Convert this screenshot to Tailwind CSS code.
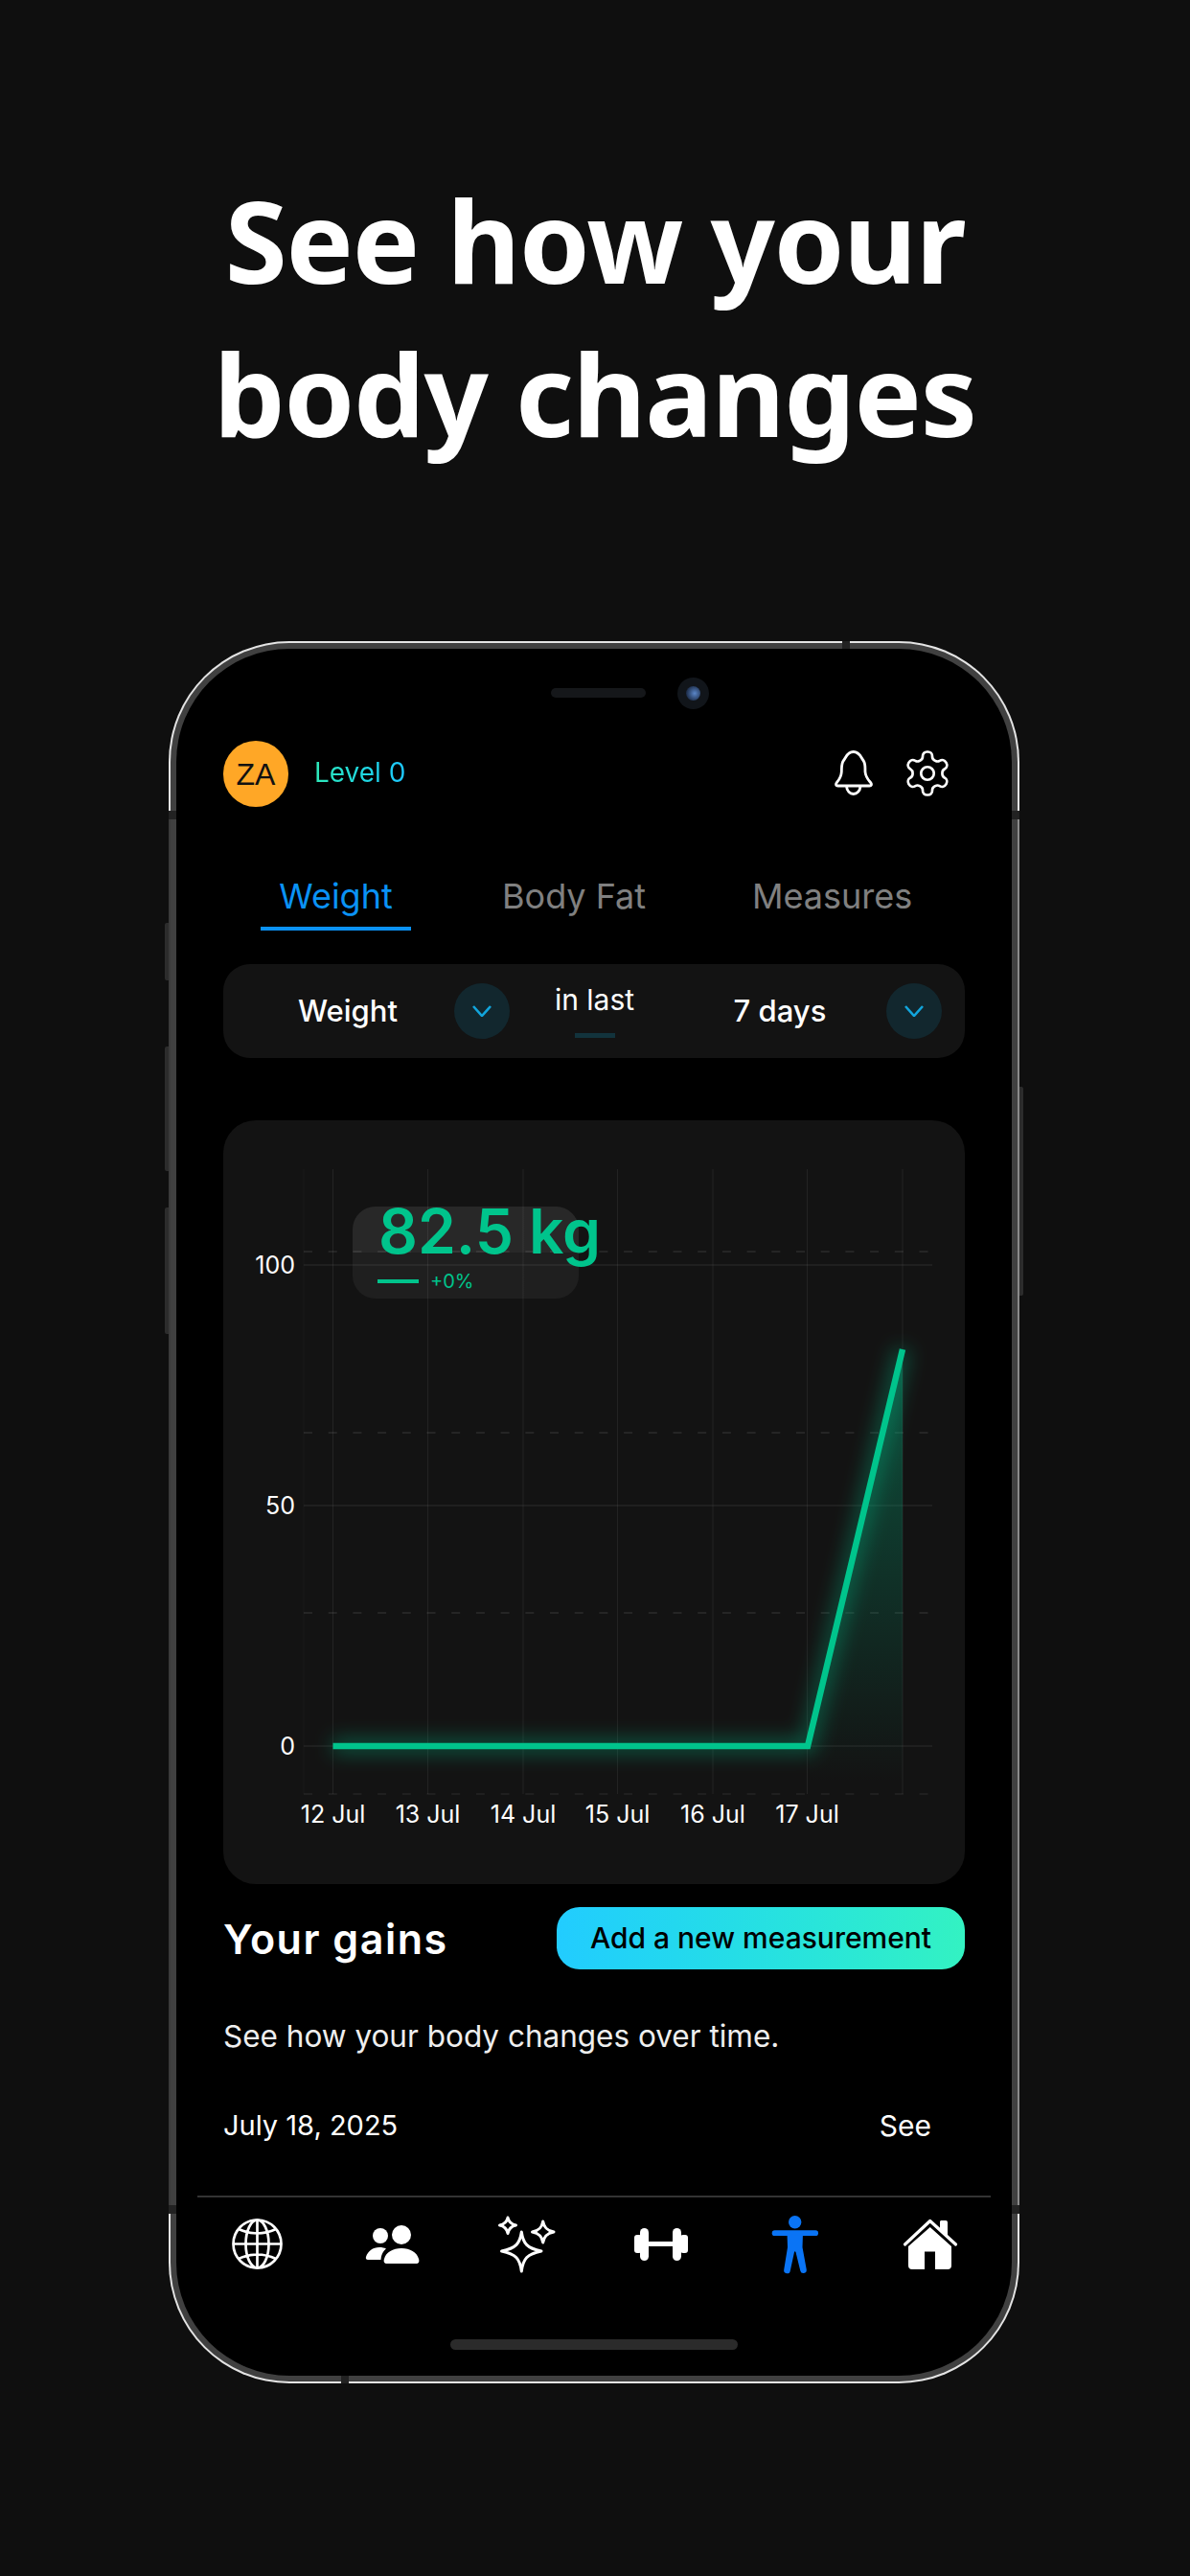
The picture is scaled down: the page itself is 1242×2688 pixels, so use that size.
<!DOCTYPE html>
<html lang="en">
<head>
<meta charset="utf-8">
<script src="https://cdn.jsdelivr.net/npm/@tailwindcss/browser@4"></script>
<title>See how your body changes</title>
</head>
<body class="m-0 bg-[#0f0f0f]">
<div class="relative w-[1242px] h-[2688px] overflow-hidden bg-[#0f0f0f] font-[Inter,sans-serif]">

  <h1 class="pt-[171px] text-center font-['Noto_Sans',sans-serif] font-bold text-[118px] tracking-[-1.2px] leading-[160px] text-white">See how your<br>body changes</h1>

  <!-- phone -->
  <div class="relative mt-[178px] ml-[176px] w-[888px] h-[1818px]">
    <!-- side buttons -->
    <div class="absolute -left-[4px] top-[294px] w-[4px] h-[60px] bg-[#2c2c2c] rounded-l-[2px]"></div>
    <div class="absolute -left-[4px] top-[423px] w-[4px] h-[130px] bg-[#2c2c2c] rounded-l-[2px]"></div>
    <div class="absolute -left-[4px] top-[591px] w-[4px] h-[132px] bg-[#2c2c2c] rounded-l-[2px]"></div>
    <div class="absolute -right-[4px] top-[465px] w-[4px] h-[218px] bg-[#2c2c2c] rounded-r-[2px]"></div>

    <div class="w-full h-full rounded-[126px] bg-[#e4e4e4] p-[2px]">
      <div class="w-full h-full rounded-[124px] bg-[#404040] p-[6px]">
        <!-- screen -->
        <div class="w-full h-full rounded-[118px] bg-black px-[49px] pt-[96px] flex flex-col">

          <!-- header -->
          <div class="flex items-center h-[69px]">
            <div class="w-[68px] h-[69px] rounded-full bg-[#ffa726] flex items-center justify-center font-['Liberation_Sans',sans-serif] text-[32px] text-[#111]">ZA</div>
            <div class="ml-[27px] w-[94px] -mt-[4px] text-center whitespace-nowrap text-[28px] leading-[36px] bg-linear-to-r from-[#2ee8b8] to-[#1ec8ff] bg-clip-text text-transparent">Level 0</div>
            <svg class="ml-auto w-[50px] h-[50px] overflow-visible" viewBox="866 782.5 50 50" fill="none" stroke="#fff" stroke-width="2.8" stroke-linejoin="round" stroke-linecap="round"><path d="M890.7 784C884 784 883 790 880.5 793C878 796 878.5 800 878.3 805C878 811 875 814 873 816.5C872 818 872.5 819.5 874.5 819.5H907.5C909.5 819.5 910 818 909 816.5C907 814 903.5 811 903 805C902.8 800 903.5 796 901 793C898.5 790 897.5 784 890.7 784ZM883.5 820C884 825 887 828 890.7 828C894.5 828 897.5 825 898 820"/></svg>
            <svg class="ml-[25px] mr-[12px] w-[54px] h-[54px] -translate-y-[1px]" viewBox="0 0 24 24" fill="none" stroke="#fff" stroke-width="1.2" stroke-linecap="round" stroke-linejoin="round"><path d="M12.22 2h-.44a2 2 0 0 0-2 2v.18a2 2 0 0 1-1 1.73l-.43.25a2 2 0 0 1-2 0l-.15-.08a2 2 0 0 0-2.73.73l-.22.38a2 2 0 0 0 .73 2.73l.15.1a2 2 0 0 1 1 1.72v.51a2 2 0 0 1-1 1.74l-.15.09a2 2 0 0 0-.73 2.73l.22.38a2 2 0 0 0 2.73.73l.15-.08a2 2 0 0 1 2 0l.43.25a2 2 0 0 1 1 1.73V20a2 2 0 0 0 2 2h.44a2 2 0 0 0 2-2v-.18a2 2 0 0 1 1-1.73l.43-.25a2 2 0 0 1 2 0l.15.08a2 2 0 0 0 2.73-.73l.22-.39a2 2 0 0 0-.73-2.73l-.15-.08a2 2 0 0 1-1-1.74v-.5a2 2 0 0 1 1-1.74l.15-.09a2 2 0 0 0 .73-2.73l-.22-.38a2 2 0 0 0-2.73-.73l-.15.08a2 2 0 0 1-2 0l-.43-.25a2 2 0 0 1-1-1.73V4a2 2 0 0 0-2-2z"/><circle cx="12" cy="12" r="3"/></svg>
          </div>

          <!-- tabs -->
          <div class="mt-[63px] flex items-start h-[66px] text-[36px] leading-[60px] text-[#808080]">
            <div class="ml-[39px] w-[157px] h-[66px] text-center whitespace-nowrap text-[#0a92f5] border-b-[4px] border-[#0a92f5]">Weight</div>
            <div class="ml-[95px] w-[148px] text-center whitespace-nowrap">Body Fat</div>
            <div class="ml-[113px] w-[166px] text-center whitespace-nowrap">Measures</div>
          </div>

          <!-- selector -->
          <div class="mt-[35px] h-[98px] shrink-0 rounded-[28px] bg-[#131313] flex items-center text-white text-[31px] font-medium">
            <div class="ml-[77px] w-[106px] text-center whitespace-nowrap">Weight</div>
            <div class="ml-[58px] w-[58px] h-[58px] rounded-full bg-[#12272e] flex items-center justify-center">
              <svg class="w-[20px] h-[12px]" viewBox="0 0 20 12" fill="none" stroke="#12a5dc" stroke-width="2.6"><path d="M1 1L10 11L19 1"/></svg>
            </div>
            <div class="ml-[47px] w-[83px] flex flex-col items-center font-normal text-[30px]">
              <div class="whitespace-nowrap leading-[40px] -mt-[5px]">in last</div>
              <div class="mt-[15px] w-[42px] h-[5px] bg-[#12333c]"></div>
            </div>
            <div class="ml-[103px] w-[98px] text-center whitespace-nowrap">7 days</div>
            <div class="ml-[62px] w-[58px] h-[58px] rounded-full bg-[#12272e] flex items-center justify-center">
              <svg class="w-[20px] h-[12px]" viewBox="0 0 20 12" fill="none" stroke="#12a5dc" stroke-width="2.6"><path d="M1 1L10 11L19 1"/></svg>
            </div>
          </div>

          <!-- chart card -->
          <div class="relative mt-[65px] h-[797px] shrink-0 rounded-[34px] bg-[#131313] overflow-hidden">
            <svg class="absolute inset-0 w-[774px] h-[797px]" viewBox="233 1169 774 797" font-family="Inter, sans-serif">
              <defs>
                <linearGradient id="area" x1="0" y1="1408" x2="0" y2="1860" gradientUnits="userSpaceOnUse">
                  <stop offset="0" stop-color="#00c48c" stop-opacity=".36"/>
                  <stop offset="1" stop-color="#00c48c" stop-opacity="0"/>
                </linearGradient>
                <filter id="glow" x="-20%" y="-20%" width="140%" height="140%"><feGaussianBlur stdDeviation="10"/></filter>
              </defs>
              <g stroke="#fff" stroke-opacity=".07" stroke-width="1">
                <path stroke-opacity=".03" d="M317 1220V1872"/>
                <path d="M347.5 1220V1872M446.5 1220V1872M546 1220V1872M644.5 1220V1872M744 1220V1872M842.5 1220V1872M942 1220V1872"/>
                <path stroke-opacity=".1" d="M317 1320H973M317 1571H973M317 1822H973"/>
              </g>
              <g stroke="#fff" stroke-opacity=".08" stroke-width="2" stroke-dasharray="9 16.7">
                <path d="M317 1306H969M317 1495H969M317 1683H969"/>
                <path stroke-opacity=".05" d="M317 1872H969"/>
              </g>
              <path d="M845 1822L942 1408V1860H845Z" fill="url(#area)"/>
              <path d="M347.5 1822H843L942 1408" fill="none" stroke="#00c48c" stroke-opacity=".42" stroke-width="14" filter="url(#glow)"/>
              <path d="M347.5 1822H843L942 1408" fill="none" stroke="#00c48c" stroke-width="6.5"/>
              <g fill="#fff" font-size="25" text-anchor="end">
                <text x="308" y="1329">100</text>
                <text x="308" y="1580">50</text>
                <text x="308" y="1831">0</text>
              </g>
              <g fill="#fff" font-size="25" text-anchor="middle">
                <text x="347.5" y="1902">12 Jul</text>
                <text x="446.5" y="1902">13 Jul</text>
                <text x="546" y="1902">14 Jul</text>
                <text x="644.5" y="1902">15 Jul</text>
                <text x="744" y="1902">16 Jul</text>
                <text x="842.5" y="1902">17 Jul</text>
              </g>
            </svg>
            <!-- tooltip -->
            <div class="absolute left-[135px] top-[90px] w-[236px] h-[96px] rounded-[24px] bg-[linear-gradient(180deg,rgba(255,255,255,.09)_50%,rgba(255,255,255,.05)_50%)] text-[#00c48c]">
              <div class="pl-[27px] whitespace-nowrap text-[64px] leading-[60px] font-semibold -mt-[4px]">82.5 kg</div>
              <div class="flex items-center ml-[26px] mt-[7px]">
                <div class="w-[43px] h-[4px] bg-[#00c48c]"></div>
                <div class="ml-[12px] w-[44px] text-[20px] leading-[30px] whitespace-nowrap">+0%</div>
              </div>
            </div>
          </div>

          <!-- gains header -->
          <div class="mt-[24px] h-[65px] shrink-0 flex items-center justify-between">
            <div class="text-[43px] tracking-[1.5px] leading-[60px] font-semibold text-white whitespace-nowrap">Your gains</div>
            <div class="w-[426px] h-[65px] rounded-[24px] bg-linear-to-r from-[#22ccff] to-[#33f2c2] flex items-center justify-center text-black text-[30px] font-medium whitespace-nowrap">Add a new measurement</div>
          </div>

          <div class="mt-[50px] h-[40px] leading-[40px] shrink-0 text-[31.5px] text-[#eeeeee] whitespace-nowrap">See how your body changes over time.</div>

          <div class="mt-[53px] h-[40px] leading-[40px] shrink-0 flex justify-between text-white pr-[35px] whitespace-nowrap">
            <div class="text-[29px]">July 18, 2025</div>
            <div class="text-[30px]">See</div>
          </div>

          <div class="mt-[53px] -mx-[27px] h-[2px] shrink-0 bg-[#333333]"></div>

          <!-- bottom nav -->
          <div class="mt-[19px] -mx-[35.5px] grid grid-cols-6 justify-items-center">
            <svg class="w-[60px] h-[60px] overflow-visible" viewBox="238 2312 60 60" fill="none" stroke="#fff" stroke-width="2.7">
              <circle cx="268.5" cy="2341.5" r="25"/>
              <ellipse cx="268.5" cy="2341.5" rx="12" ry="25"/>
              <path d="M268.5 2316.5V2366.5M243.5 2341.5H293.5M249 2326Q268.5 2335 288 2326M249 2357Q268.5 2348 288 2357"/>
            </svg>
            <svg class="w-[60px] h-[60px] overflow-visible" viewBox="379 2312 60 60" fill="#fff">
              <circle cx="397" cy="2333" r="8"/>
              <circle cx="419" cy="2332" r="10"/>
              <path d="M404 2362H434C437 2362 438 2360 437 2357C435 2350 428 2346 419 2346C410 2346 403 2350 401 2357C400 2360 401 2362 404 2362Z"/>
              <path d="M384 2358C382 2358 381.500 2356.500 382 2355C384 2349 389 2345 396 2345C399 2345 401 2345.500 403 2346.500C400 2349 398 2352 397.500 2358Z"/>
            </svg>
            <svg class="w-[60px] h-[60px] overflow-visible" viewBox="520 2312 60 60" fill="none" stroke="#fff" stroke-width="3" stroke-linejoin="round">
              <path d="M544.300 2329C546 2341 550 2346 565 2349C550 2352 546 2357 544.300 2370C542.600 2357 538.600 2352 523.500 2349C538.600 2346 542.600 2341 544.300 2329Z"/>
              <path d="M530 2314C531 2318.500 533 2321 538.500 2322C533 2323 531 2325.500 530 2330.500C529 2325.500 527 2323 521.500 2322C527 2321 529 2318.500 530 2314Z"/>
              <path d="M566.700 2318C567.800 2324 570.500 2327.500 578 2329C570.500 2330.500 567.800 2334 566.700 2340C565.600 2334 563 2330.500 555.500 2329C563 2327.500 565.600 2324 566.700 2318Z"/>
            </svg>
            <svg class="w-[60px] h-[60px] overflow-visible" viewBox="661 2312 60 60" fill="#fff">
              <rect x="663" y="2332" width="8" height="19" rx="3"/>
              <rect x="669" y="2325" width="9" height="34" rx="4.500"/>
              <rect x="677" y="2339" width="27" height="5"/>
              <rect x="703" y="2325" width="9" height="34" rx="4.500"/>
              <rect x="711" y="2332" width="8" height="19" rx="3"/>
            </svg>
            <svg class="w-[60px] h-[60px] overflow-visible" viewBox="802 2312 60 60" fill="#0a74f5">
              <circle cx="830.700" cy="2318.700" r="6.700"/>
              <rect x="806.700" y="2327.300" width="48.300" height="5.700" rx="2.850"/>
              <path d="M822.500 2330H839L838.500 2345L842.800 2368.500A3.300 3.300 0 0 1 836.300 2369.500L831.500 2350Q830.700 2348.500 830 2350L825.800 2369.500A3.300 3.300 0 0 1 819.200 2368.500L823 2345Z"/>
            </svg>
            <svg class="w-[60px] h-[60px] overflow-visible" viewBox="943 2312 60 60" fill="#fff">
              <path d="M983 2317H988Q990 2317 990 2319V2334L982 2327V2318Z"/>
              <path d="M945.500 2342L971.700 2317.500L998.500 2342" fill="none" stroke="#fff" stroke-width="3.200" stroke-linecap="round" stroke-linejoin="round"/>
              <path d="M971.700 2324L994 2344V2364Q994 2368 990 2368H977V2349.500H966V2368H953Q949 2368 949 2364V2344Z"/>
            </svg>
          </div>

          <div class="mt-[69px] self-center w-[300px] h-[11px] shrink-0 rounded-full bg-[#2b2b2b]"></div>
        </div>
      </div>
    </div>

    <!-- bezel details -->
    <div class="absolute left-0 top-[186px] w-[2px] h-[1450px] bg-[#3a3a3a]"></div>
    <div class="absolute right-0 top-[186px] w-[2px] h-[1450px] bg-[#8a8a8a]"></div>
    <div class="absolute left-0 top-[177px] w-[8px] h-[9px] bg-[#222]"></div>
    <div class="absolute right-0 top-[177px] w-[8px] h-[9px] bg-[#222]"></div>
    <div class="absolute left-0 top-[1632px] w-[8px] h-[9px] bg-[#222]"></div>
    <div class="absolute right-0 top-[1632px] w-[8px] h-[9px] bg-[#222]"></div>
    <div class="absolute left-[703px] top-0 w-[8px] h-[8px] bg-[#222]"></div>
    <div class="absolute left-[180px] bottom-0 w-[8px] h-[8px] bg-[#222]"></div>

    <!-- speaker + camera -->
    <div class="absolute left-[399px] top-[49px] w-[99px] h-[10px] rounded-full bg-[#15171a]"></div>
    <div class="absolute left-[531px] top-[38px] w-[33px] h-[33px] rounded-full bg-[#11151a] flex items-center justify-center">
      <div class="w-[15px] h-[15px] rounded-full bg-[radial-gradient(circle_at_60%_50%,#5a86c8,#1c2c48_75%)]"></div>
    </div>
  </div>
</div>
</body>
</html>
